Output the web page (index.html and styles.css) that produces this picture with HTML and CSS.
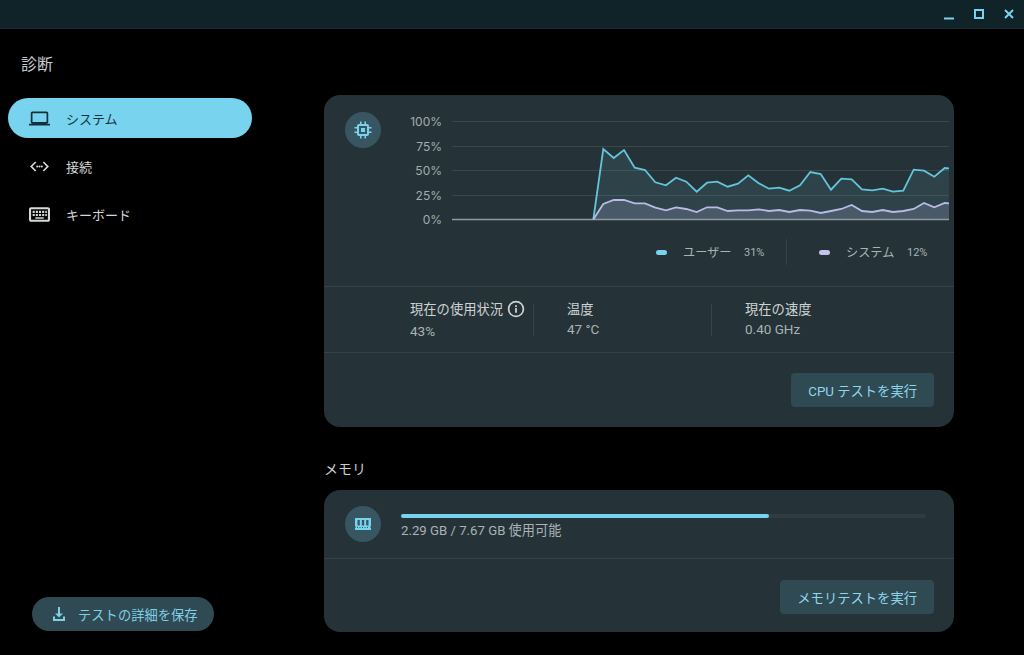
FILE: index.html
```html
<!DOCTYPE html>
<html lang="ja">
  <head>
    <meta charset="UTF-8" />
    <title>診断</title>
    <link rel="stylesheet" href="styles.css">
  </head>
  <body>
    <header class="title-bar">
      <svg class="win-icon" width="12" height="12" viewBox="0 0 12 12"><path d="M1 10.500h10" /></svg>
      <svg class="win-icon" width="12" height="12" viewBox="0 0 12 12"><path d="M2 2h8v8H2z" /></svg>
      <svg class="win-icon" width="12" height="12" viewBox="0 0 12 12"><path d="M2 2l8 8M10 2l-8 8" /></svg>
    </header>

    <div class="container">
      <aside class="sidebar">
        <h1 class="app-title">診断</h1>
        <nav class="nav-links">
          <a class="nav-item active">
            <svg width="21" height="21" viewBox="0 0 24 24"><path fill="currentColor" d="M20 18c1.100 0 2-.9 2-2V6c0-1.100-.9-2-2-2H4c-1.100 0-2 .9-2 2v10c0 1.100.9 2 2 2H0v2h24v-2h-4zM4 6h16v10H4V6z" /></svg>
            <span>システム</span>
          </a>
          <a class="nav-item">
            <svg width="21" height="21" viewBox="2 2 20 20"><path fill="currentColor" d="M7.800 7.200 3 12l4.800 4.800 1.100-1.100L5.200 12l3.700-3.700zM16.200 7.200l-1.100 1.100 3.700 3.700-3.700 3.700 1.100 1.100L21 12z" /><circle fill="currentColor" cx="9.800" cy="12" r="1" /><circle fill="currentColor" cx="12" cy="12" r="1" /><circle fill="currentColor" cx="14.200" cy="12" r="1" /></svg>
            <span>接続</span>
          </a>
          <a class="nav-item">
            <svg width="21" height="21" viewBox="2 2 20 20"><path fill="currentColor" d="M20 5H4c-1.100 0-2 .9-2 2v10c0 1.100.9 2 2 2h16c1.100 0 2-.9 2-2V7c0-1.100-.9-2-2-2zm0 12H4V7h16v10zM5.500 8.500h2v2h-2zm3 0h2v2h-2zm3 0h2v2h-2zm3 0h2v2h-2zm3 0h1.500v2h-1.500zm-12 3h2v2h-2zm3 0h2v2h-2zm3 0h2v2h-2zm3 0h2v2h-2zm3 0h1.500v2h-1.500zM8 14.500h8V16H8z" /></svg>
            <span>キーボード</span>
          </a>
        </nav>
        <button class="save-btn">
          <svg width="20" height="20" viewBox="0 0 20 20"><path fill="currentColor" d="M9 3h2v6.500h3L10 13.500 6 9.500h3zM4 12.500h2V15h8v-2.500h2V17H4z" /></svg>
          <span>テストの詳細を保存</span>
        </button>
      </aside>

      <main class="content">
        <section class="card cpu-card">
          <div class="chart-row">
            <div class="round-icon">
              <svg width="20" height="20" viewBox="0 0 20 20"><path fill="currentColor" fill-rule="evenodd" d="M7 1.500h1.500V4h3V1.500H13V4h1a2 2 0 0 1 2 2v1h2.500v1.500H16v3h2.500V13H16v1a2 2 0 0 1-2 2h-1v2.500h-1.500V16h-3v2.500H7V16H6a2 2 0 0 1-2-2v-1H1.500v-1.500H4v-3H1.500V7H4V6a2 2 0 0 1 2-2h1zM6 6v8h8V6z" /><rect fill="currentColor" x="8" y="8" width="4" height="4" /></svg>
            </div>
            <div class="chart-area">
              <div class="chart">
                <div class="y-labels">
                  <span>100%</span><span>75%</span><span>50%</span><span>25%</span><span>0%</span>
                </div>
                <svg class="plot" width="497" height="110" viewBox="452 115 497 110">
                  <path class="grid" d="M452 121.500H949M452 146.500H949M452 170.500H949M452 195.500H949" />
                  <polygon class="fill-user" points="593.300,219.500 603.300,149 613.700,158 624,150 634.700,167.700 645,170 655.300,182.300 666,185.300 676,177.700 686.300,181.700 696.700,191.700 707,182.700 717.300,181.700 727.700,186.700 738,183.700 748.300,175.300 758.700,183.300 769,188.700 779.300,187.700 789.300,190.700 800,185.300 810.300,172 820.700,174 831,189.700 841.300,178.700 851.700,179.300 862,189.300 872.300,190.300 882.700,188.700 893,191.700 903.300,190.700 913.700,169.700 924,170.700 934.300,176.700 944.700,168 949,168.300 949,219.500" />
                  <polygon class="fill-system" points="593.300,219.500 603.300,204 613.700,200 624,200 634.700,203.300 645,203.300 655.300,207.700 666,210.300 676,207.300 686.300,209 696.700,212 707,207.300 717.300,207.300 727.700,211 738,210.300 748.300,210.300 758.700,209.300 769,211 779.300,210 789.300,212 800,210 810.300,210.700 820.700,213 831,211 841.300,209 851.700,205 862,211 872.300,212 882.700,210 893,212 903.300,211 913.700,209 924,203 934.300,207.300 944.700,203 949,203.300 949,219.500" />
                  <path class="axis" d="M452 219.500H949" />
                  <polyline class="line-user" points="593.300,219.500 603.300,149 613.700,158 624,150 634.700,167.700 645,170 655.300,182.300 666,185.300 676,177.700 686.300,181.700 696.700,191.700 707,182.700 717.300,181.700 727.700,186.700 738,183.700 748.300,175.300 758.700,183.300 769,188.700 779.300,187.700 789.300,190.700 800,185.300 810.300,172 820.700,174 831,189.700 841.300,178.700 851.700,179.300 862,189.300 872.300,190.300 882.700,188.700 893,191.700 903.300,190.700 913.700,169.700 924,170.700 934.300,176.700 944.700,168 949,168.300" />
                  <polyline class="line-system" points="593.300,219.500 603.300,204 613.700,200 624,200 634.700,203.300 645,203.300 655.300,207.700 666,210.300 676,207.300 686.300,209 696.700,212 707,207.300 717.300,207.300 727.700,211 738,210.300 748.300,210.300 758.700,209.300 769,211 779.300,210 789.300,212 800,210 810.300,210.700 820.700,213 831,211 841.300,209 851.700,205 862,211 872.300,212 882.700,210 893,212 903.300,211 913.700,209 924,203 934.300,207.300 944.700,203 949,203.300" />
                </svg>
              </div>
              <div class="legend">
                <div class="legend-item user">
                  <i class="dot"></i><span class="legend-name">ユーザー</span><span class="legend-value">31%</span>
                </div>
                <div class="legend-item system">
                  <i class="dot"></i><span class="legend-name">システム</span><span class="legend-value">12%</span>
                </div>
              </div>
            </div>
          </div>

          <div class="stats">
            <div class="stat stat-usage">
              <div class="stat-label">現在の使用状況
                <svg width="18" height="18" viewBox="0 0 18 18"><circle cx="9" cy="9" r="7.400" fill="none" stroke="currentColor" stroke-width="1.700" /><path fill="currentColor" d="M8.100 8h1.800v4.800H8.100zM8.100 5.200h1.800v1.700H8.100z" /></svg>
              </div>
              <div class="stat-value">43%</div>
            </div>
            <div class="stat stat-temp">
              <div class="stat-label">温度</div>
              <div class="stat-value">47 °C</div>
            </div>
            <div class="stat stat-speed">
              <div class="stat-label">現在の速度</div>
              <div class="stat-value">0.40 GHz</div>
            </div>
          </div>

          <div class="card-footer">
            <button class="run-btn">CPU テストを実行</button>
          </div>
        </section>

        <h2 class="section-title">メモリ</h2>

        <section class="card memory-card">
          <div class="memory-row">
            <div class="round-icon">
              <svg width="20" height="20" viewBox="0 0 20 20"><path fill="currentColor" fill-rule="evenodd" d="M2 4h16v8.500h-1v1h1V16H2v-2.500h1v-1H2zM4.500 6v5.500h2.300V6zm4.300 0v5.500h2.400V6zm4.400 0v5.500h2.300V6zM4 13v1h1v-1zm2.500 0v1h1v-1zm2.500 0v1h1v-1zm2.500 0v1h1v-1zm2.500 0v1h1v-1z" /></svg>
            </div>
            <div class="memory-info">
              <div class="progress"><div class="progress-fill" style="width: 70.100%"></div></div>
              <div class="memory-text">2.29 GB / 7.67 GB 使用可能</div>
            </div>
          </div>
          <div class="card-footer">
            <button class="run-btn">メモリテストを実行</button>
          </div>
        </section>
      </main>
    </div>
  </body>
</html>
```

FILE: styles.css
```css
* {
  box-sizing: border-box;
}

body {
  font-family: Roboto, "Noto Sans CJK JP", sans-serif;
  margin: 0;
  width: 1024px;
  height: 655px;
  overflow: hidden;
  background-color: #000;
  color: #c4cacc;
}

/* Title bar */
.title-bar {
  height: 29px;
  display: flex;
  justify-content: flex-end;
  align-items: center;
  gap: 18px;
  padding: 0 9px 0 0;
  background-color: #0f2329;
  border-bottom: 1px solid #16292e;
}

.win-icon {
  fill: none;
  stroke: #78d4ee;
  stroke-width: 2;
}

.container {
  display: flex;
  height: 626px;
}

/* Sidebar */
.sidebar {
  width: 324px;
  flex: none;
  display: flex;
  flex-direction: column;
  padding: 0 0 24px 8px;
}

.app-title {
  font-size: 16px;
  font-weight: 400;
  line-height: 22px;
  margin: 25px 0 22px 13px;
  color: #c9cdce;
}

.nav-links {
  display: flex;
  flex-direction: column;
  gap: 8px;
  width: 244px;
}

.nav-item {
  height: 40px;
  display: flex;
  align-items: center;
  gap: 16px;
  padding-left: 21px;
  border-radius: 20px;
  font-size: 13px;
  color: #d5d8d9;
}

.nav-item.active {
  background-color: #78d4ee;
  color: #11323d;
}

.save-btn {
  margin: auto 0 0 24px;
  width: 182px;
  height: 34px;
  display: flex;
  align-items: center;
  gap: 9px;
  padding: 0 0 0 17px;
  border: none;
  border-radius: 17px;
  background-color: #2f4a53;
  color: #7fcfe6;
  font-family: inherit;
  font-size: 13.300px;
}

/* Main content */
.content {
  width: 630px;
  padding-top: 66px;
}

.card {
  background-color: #253237;
  border-radius: 16px;
}

.cpu-card {
  height: 332px;
  display: flex;
  flex-direction: column;
}

.chart-row {
  height: 192px;
  flex: none;
  display: flex;
  padding: 17px 0 0 21px;
  border-bottom: 1px solid #354349;
}

.round-icon {
  width: 36px;
  height: 36px;
  flex: none;
  display: flex;
  align-items: center;
  justify-content: center;
  border-radius: 50%;
  background-color: #375661;
  color: #78d4ee;
}

.chart-area {
  flex: 1;
  display: flex;
  flex-direction: column;
}

.chart {
  display: flex;
  height: 113px;
}

.y-labels {
  width: 61px;
  height: 113px;
  margin-top: 2px;
  margin-right: 10px;
  display: flex;
  flex-direction: column;
  justify-content: space-between;
  align-items: flex-end;
  font-family: Inter, sans-serif;
  font-size: 12px;
  line-height: 15px;
  color: #a3adb0;
}

.plot {
  flex: none;
  margin-top: 3px;
}

.grid {
  stroke: #3a474b;
  fill: none;
}

.axis {
  stroke: #8f9a9e;
  stroke-width: 1.500;
  fill: none;
}

.fill-user {
  fill: #78d4ee;
  fill-opacity: 0.1;
}

.fill-system {
  fill: #b8b8e8;
  fill-opacity: 0.2;
}

.line-user {
  fill: none;
  stroke: #62c5dc;
  stroke-width: 1.800;
}

.line-system {
  fill: none;
  stroke: #b9bbe6;
  stroke-width: 1.800;
}

.legend {
  display: flex;
  justify-content: flex-end;
  margin-top: 14px;
  padding-right: 25px;
}

.legend-item {
  height: 26px;
  display: flex;
  align-items: center;
  font-size: 12.200px;
  color: #a9b2b5;
  white-space: nowrap;
}

.legend-item.user {
  width: 131px;
  flex: none;
  border-right: 1px solid #364449;
}

.legend-item.system {
  width: 142px;
  flex: none;
  padding-left: 32px;
}

.dot {
  width: 11px;
  height: 5px;
  flex: none;
  border-radius: 3px;
  margin-right: 16px;
}

.user .dot {
  background-color: #78d4ee;
}

.system .dot {
  background-color: #c2c3ee;
}

.legend-name {
  width: 61px;
  flex: none;
}

.legend-value {
  font-size: 11px;
}

/* Stats */
.stats {
  height: 66px;
  flex: none;
  display: flex;
  align-items: center;
  padding-left: 86px;
  border-bottom: 1px solid #354349;
}

.stat {
  height: 32px;
}

.stat-usage {
  width: 124px;
  border-right: 1px solid #364449;
}

.stat-temp {
  width: 178px;
  padding-left: 33px;
  border-right: 1px solid #364449;
}

.stat-speed {
  padding-left: 33px;
}

.stat-label {
  display: flex;
  align-items: center;
  gap: 4px;
  height: 18px;
  margin-top: -4px;
  font-size: 13.300px;
  color: #cdd2d3;
  white-space: nowrap;
}

.stat-value {
  margin-top: 3px;
  font-size: 13.500px;
  line-height: 16px;
  color: #a9b2b5;
}

.stat-usage .stat-value {
  margin-top: 5px;
}

/* Footer and buttons */
.card-footer {
  flex: 1;
  display: flex;
  justify-content: flex-end;
  align-items: flex-start;
  padding: 20px 20px 0 0;
}

.run-btn {
  height: 34px;
  padding: 0 17px;
  border: none;
  border-radius: 4px;
  background-color: #2f4a53;
  color: #8ed6ec;
  font-family: inherit;
  font-size: 13.300px;
}

.section-title {
  font-size: 14px;
  font-weight: 400;
  line-height: 20px;
  margin: 32px 0 11px;
  color: #c9cdce;
}

/* Memory card */
.memory-card {
  height: 142px;
  display: flex;
  flex-direction: column;
}

.memory-card .card-footer {
  padding-top: 21px;
}

.memory-row {
  height: 69px;
  flex: none;
  display: flex;
  gap: 20px;
  padding: 16px 28px 0 21px;
  border-bottom: 1px solid #354349;
}

.memory-info {
  flex: 1;
  padding-top: 8px;
}

.progress {
  height: 4px;
  border-radius: 2px;
  background-color: #2f3d42;
}

.progress-fill {
  height: 100%;
  border-radius: 2px;
  background-color: #78d4ee;
}

.memory-text {
  margin-top: 3px;
  font-size: 13.200px;
  line-height: 20px;
  color: #a9b2b5;
}
```
